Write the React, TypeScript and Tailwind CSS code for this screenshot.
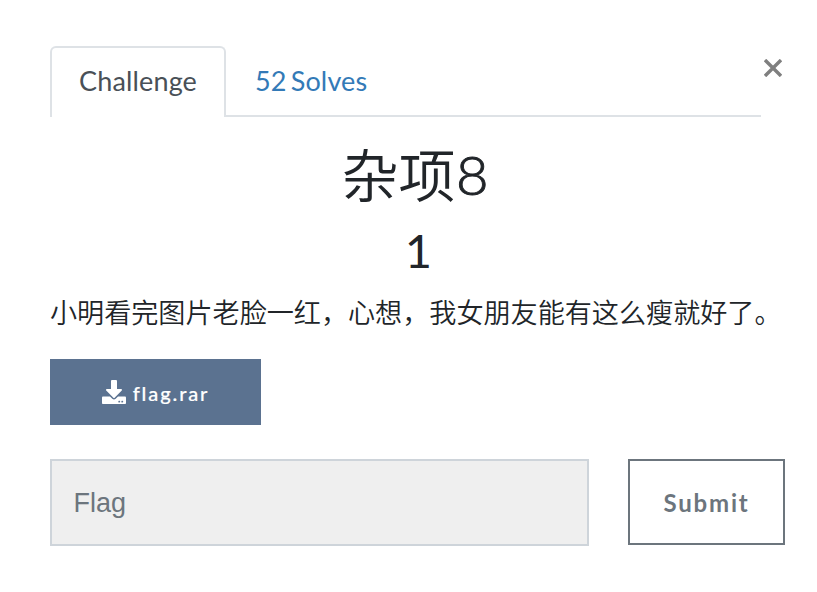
import { FaDownload } from "react-icons/fa";

const cjk = "font-['Lato','Noto_Sans_CJK_SC',sans-serif]";

export default function App() {
  return (
    <div className={`h-[592px] w-[817px] overflow-hidden bg-white pl-[50px] pt-[46px] text-[#212529] ${cjk}`}>
      <div className="flex h-[71px] w-[735px]">
        <nav className="flex w-[711px] border-b-2 border-[#dee2e6] text-[27px] leading-[40px]">
          <div className="-mb-0.5 h-[71px] w-[176px] rounded-t-[6px] border-2 border-b-0 border-[#dee2e6] bg-white pl-[27px] pt-[13px] tracking-[0.15px] text-[#495057]">
            Challenge
          </div>
          <div className="pl-[29px] pt-[15px] tracking-[0.15px] [word-spacing:-3px] text-[#337ab7]">52 Solves</div>
        </nav>
        <button className="flex h-[44px] w-[24px] items-center justify-center" aria-label="Close">
          <svg width="18" height="18" viewBox="0 0 18 18" stroke="#7f7f7f" strokeWidth="3.4">
            <path d="M1 1 17 17M17 1 1 17" />
          </svg>
        </button>
      </div>
      <h2 className="mt-[23px] flex h-[72px] w-[729px] justify-center text-[57px] leading-[70px]">
        <span className="font-[350]">杂项</span>
        <span className="w-[32px] origin-left scale-x-[1.04] text-[54px] font-light leading-[70px] [-webkit-text-stroke:0.9px_#212529]">8</span>
      </h2>
      <h3 className="mt-[8px] h-[60px] w-[737px] text-center text-[47px] leading-[60px]">1</h3>
      <p className="mt-[13px] h-[40px] whitespace-nowrap text-[27.1px] font-[350] leading-[40px]">
        小明看完图片老脸一红，心想，我女朋友能有这么瘦就好了。
      </p>
      <button className="mt-[26px] flex h-[66px] w-[211px] items-center justify-center gap-[8px] bg-[#5b7290] text-[20px] font-medium tracking-[1.9px] text-white">
        <FaDownload size={24} />
        <span className="-ml-px pt-px [-webkit-text-stroke:0.2px_white]">flag.rar</span>
      </button>
      <div className="mt-[34px] flex w-[735px] justify-between">
        <div className="flex h-[87px] w-[538.5px] items-center border-2 border-[#ced4da] bg-[#efefef] pl-[21.5px] pt-[2px] font-['Liberation_Sans',sans-serif] text-[27px] text-[#6c757d]">
          Flag
        </div>
        <button className="h-[86px] w-[157px] border-2 border-[#6c757d] pt-[2px] text-[24px] font-bold tracking-[1.8px] text-[#6c757d]">
          Submit
        </button>
      </div>
    </div>
  );
}
